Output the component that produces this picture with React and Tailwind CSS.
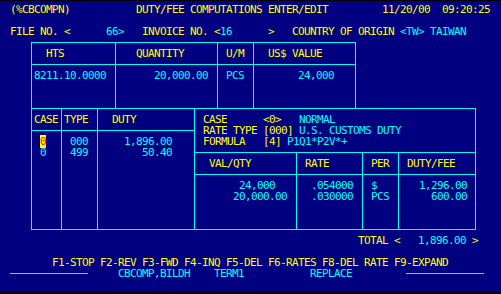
const Y = "text-[#ffff00]";
const C = "text-[#00ffff]";
const line = "border-[#00ffff]";

export default function App() {
  return (
    <div className="h-[294px] w-[501px] bg-black pt-px">
      <div className="h-[291px] bg-[#000080] pt-[3px] font-['DejaVu_Sans_Mono','Liberation_Mono',monospace] text-[11px] leading-[11px] tracking-[-0.6226px] whitespace-pre">
        {/* title rows */}
        <div className={`h-[11px] pl-[4px] ${Y}`}>
          {" (%CBCOMPN)           DUTY/FEE COMPUTATIONS ENTER/EDIT         11/20/00  09:20:25"}
        </div>
        <div className="h-[11px]" />
        <div className="h-[11px] pl-[4px]">
          <span className={Y}>{" FILE NO. <"}</span>
          <span className={C}>{"      66>"}</span>
          <span className={Y}>{"   INVOICE NO. <"}</span>
          <span className={C}>{"16"}</span>
          <span className={Y}>{"      >   COUNTRY OF ORIGIN "}</span>
          <span className={C}>{"<TW> TAIWAN"}</span>
        </div>

        {/* HTS box */}
        <div className={`mt-[5px] ml-[31px] w-[325px] border-x border-t ${line}`}>
          <div className={`flex h-[22px] border-b ${line} ${Y}`}>
            <div className={`flex w-[84px] items-center border-r ${line} pl-[14px]`}>HTS</div>
            <div className={`flex w-[102px] items-center border-r ${line} pl-[20px]`}>QUANTITY</div>
            <div className={`flex w-[36px] items-center border-r ${line} pl-[8px]`}>U/M</div>
            <div className="flex flex-1 items-center pl-[14px]">US$ VALUE</div>
          </div>
          <div className={`flex h-[43px] ${C}`}>
            <div className={`w-[84px] border-r ${line} pl-[2px] pt-[5px]`}>8211.10.0000</div>
            <div className={`w-[102px] border-r ${line} pl-[38px] pt-[5px]`}>20,000.00</div>
            <div className={`w-[36px] border-r ${line} pl-[8px] pt-[5px]`}>PCS</div>
            <div className="flex-1 pl-[44px] pt-[5px]">24,000</div>
          </div>
        </div>

        {/* case / duty box */}
        <div className={`ml-[31px] flex h-[122px] w-[445px] border ${line}`}>
          <div className={`flex w-[163px] flex-col border-r ${line}`}>
            <div className={`flex h-[22px] border-b ${line} ${Y}`}>
              <div className={`flex w-[30px] items-center border-r ${line} pl-[2px]`}>CASE</div>
              <div className={`flex w-[36px] items-center border-r ${line} pl-[2px]`}>TYPE</div>
              <div className="flex flex-1 items-center pl-[14px]">DUTY</div>
            </div>
            <div className={`flex flex-1 ${C}`}>
              <div className={`w-[30px] border-r ${line} pl-[8px] pt-[5px]`}>
                <div>
                  <span className="bg-[#ffff00] text-[#e01010]">0</span>
                </div>
                <div>0</div>
              </div>
              <div className={`w-[36px] border-r ${line} pl-[8px] pt-[5px]`}>
                <div>000</div>
                <div>499</div>
              </div>
              <div className="flex-1 pl-[26px] pt-[5px]">
                <div>1,896.00</div>
                <div>{"   50.40"}</div>
              </div>
            </div>
          </div>

          <div className="flex flex-1 flex-col">
            <div className={`h-[44px] border-b ${line} pl-[8px] pt-[5px]`}>
              <div>
                <span className={Y}>{"CASE      <0>   "}</span>
                <span className={C}>NORMAL</span>
              </div>
              <div>
                <span className={Y}>{"RATE TYPE [000] "}</span>
                <span className={C}>U.S. CUSTOMS DUTY</span>
              </div>
              <div>
                <span className={Y}>{"FORMULA   [4] "}</span>
                <span className={C}>P1Q1*P2V*+</span>
              </div>
            </div>
            <div className={`flex h-[22px] border-b ${line} ${Y}`}>
              <div className={`flex w-[102px] items-center border-r ${line} pl-[14px]`}>VAL/QTY</div>
              <div className={`flex w-[66px] items-center border-r ${line} pl-[8px]`}>RATE</div>
              <div className={`flex w-[36px] items-center border-r ${line} pl-[8px]`}>PER</div>
              <div className="flex flex-1 items-center pl-[8px]">DUTY/FEE</div>
            </div>
            <div className={`flex flex-1 ${C}`}>
              <div className={`w-[102px] border-r ${line} pl-[38px] pt-[5px]`}>
                <div>{" 24,000"}</div>
                <div>20,000.00</div>
              </div>
              <div className={`w-[66px] border-r ${line} pl-[14px] pt-[5px]`}>
                <div>.054000</div>
                <div>.030000</div>
              </div>
              <div className={`w-[36px] border-r ${line} pl-[8px] pt-[5px]`}>
                <div>$</div>
                <div>PCS</div>
              </div>
              <div className="flex-1 pl-[20px] pt-[5px]">
                <div>1,296.00</div>
                <div>{"  600.00"}</div>
              </div>
            </div>
          </div>
        </div>

        {/* totals and function keys */}
        <div className="mt-[5px] h-[11px] pl-[4px]">
          <span className={Y}>{"                                                           TOTAL <   "}</span>
          <span className={C}>1,896.00</span>
          <span className={Y}>{" >"}</span>
        </div>
        <div className="h-[11px]" />
        <div className={`h-[11px] pl-[4px] ${Y}`}>
          {"        F1-STOP F2-REV F3-FWD F4-INQ F5-DEL F6-RATES F8-DEL RATE F9-EXPAND"}
        </div>
        <div className={`flex h-[11px] items-center pl-[10px] ${C}`}>
          <div className="h-px w-[78px] bg-[#00ffff]" />
          <span>{"     CBCOMP,BILDH    TERM1           REPLACE         "}</span>
          <div className="h-px w-[78px] bg-[#00ffff]" />
        </div>
      </div>
    </div>
  );
}
